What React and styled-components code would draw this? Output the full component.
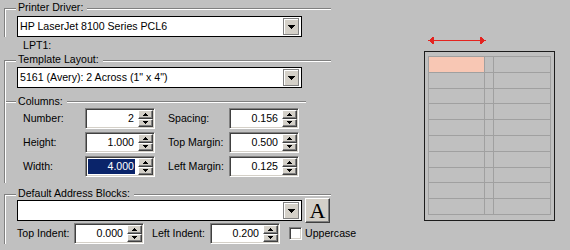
import { Fragment } from "react";
import styled, { createGlobalStyle } from "styled-components";

const GlobalStyle = createGlobalStyle`
  html, body { margin: 0; padding: 0; }
  body {
    background: #c0c0c0;
    font-family: "Liberation Sans", Arial, sans-serif;
    font-size: 10.6px;
    line-height: 13px;
    color: #000;
  }
`;

const Window = styled.div`
  display: flex;
  width: 570px;
  height: 250px;
  overflow: hidden;
`;

const FormPane = styled.div`
  flex: none;
  width: 331px;
  padding-left: 4px;
  box-sizing: border-box;
`;

// etched group box: only top + left edges, like the old label dialogs
const Group = styled.section`
  margin-top: ${(p) => p.$top}px;
  padding: 0 0 ${(p) => p.$bottom || 0}px 12px;
  border-top: 1px solid #808080;
  border-left: 1px solid #808080;
  box-shadow: inset 1px 1px 0 #fff;
`;

const Legend = styled.div`
  width: max-content;
  margin: -8px 0 0 -1px;
  padding: 0 4px 0 2px;
  background: #c0c0c0;
`;

const Note = styled.div`
  margin-top: 2px;
  padding-left: 19px;
`;

const Combo = styled.div`
  display: flex;
  align-items: center;
  width: 285px;
  height: 21px;
  margin-top: ${(p) => p.$top || 0}px;
  box-sizing: border-box;
  border: 1px solid #000;
  background: #fff;
`;

const ComboText = styled.span`
  flex: 1;
  padding-left: 2px;
  white-space: nowrap;
  overflow: hidden;
`;

const DropButton = styled.span`
  display: flex;
  align-items: center;
  justify-content: center;
  width: 16px;
  height: 17px;
  margin-right: 2px;
  box-sizing: border-box;
  background: #d4d0c8;
  border: 1px solid #808080;
  box-shadow: inset 1px 1px 0 #fff;
`;

const Divider = styled.div`
  display: flex;
  align-items: center;
  width: 300px;
  margin: 7px 0 0 -11px;
`;

const Etch = styled.span`
  flex: ${(p) => (p.$grow ? 1 : "none")};
  width: ${(p) => p.$w || 0}px;
  height: 0;
  border-top: 1px solid #808080;
  border-bottom: 1px solid #fff;
`;

const DividerText = styled.span`
  padding: 0 4px 0 2px;
`;

const FieldGrid = styled.div`
  display: grid;
  grid-template-columns: 62px 83px 61px 70px;
  grid-auto-rows: 21px;
  row-gap: 3px;
  margin-left: 6px;
  align-items: center;
`;

const Label = styled.span`
  width: ${(p) => (p.$w ? `${p.$w}px` : "auto")};
  margin-left: ${(p) => p.$gap || 0}px;
  flex: none;
  white-space: nowrap;
`;

const Spinner = styled.div`
  display: flex;
  align-items: center;
  width: 70px;
  height: 21px;
  flex: none;
  box-sizing: border-box;
  padding: 1px 1px 1px 2px;
  background: #fff;
  border: 1px solid;
  border-color: #808080 #fff #fff #808080;
  box-shadow: inset 1px 1px 0 #404040, inset -1px -1px 0 #d4d0c8;
`;

const SpinValue = styled.span`
  flex: 1;
  height: 15px;
  line-height: 15px;
  margin-right: 3px;
  padding-right: 1px;
  text-align: right;
  background: ${(p) => (p.$selected ? "#0a246a" : "transparent")};
  color: ${(p) => (p.$selected ? "#fff" : "#000")};
`;

const SpinStack = styled.div`
  display: flex;
  flex-direction: column;
  width: 15px;
  height: 17px;
`;

const SpinButton = styled.span`
  flex: 1;
  display: flex;
  align-items: center;
  justify-content: center;
  box-sizing: border-box;
  background: #d4d0c8;
  border: 1px solid;
  border-color: #fff #404040 #404040 #fff;
  box-shadow: inset -1px -1px 0 #808080;
`;

const AddressRow = styled.div`
  display: flex;
  align-items: center;
`;

const FontButton = styled.button`
  display: flex;
  align-items: center;
  justify-content: center;
  width: 25px;
  height: 25px;
  margin: -2px 0 -2px 3px;
  padding: 0;
  box-sizing: border-box;
  background: #d4d0c8;
  border: 1px solid;
  border-color: #fff #404040 #404040 #fff;
  box-shadow: inset -1px -1px 0 #808080;
  font-family: "Liberation Serif", "Times New Roman", serif;
  font-size: 22px;
  line-height: 1;
  color: #000;
`;

const IndentRow = styled.div`
  display: flex;
  align-items: center;
  height: 21px;
  margin-top: 2px;
`;

const CheckBox = styled.span`
  width: 13px;
  height: 13px;
  margin-left: 9px;
  flex: none;
  box-sizing: border-box;
  background: #fff;
  border: 1px solid;
  border-color: #808080 #fff #fff #808080;
  box-shadow: inset 1px 1px 0 #404040, inset -1px -1px 0 #d4d0c8;
`;

const PreviewPane = styled.div`
  flex: 1;
  padding: 37px 0 0 93px;
`;

const WidthArrow = styled.svg`
  display: block;
  margin-left: 4px;
`;

const Page = styled.div`
  width: 131px;
  height: 170px;
  margin-top: 7px;
  box-sizing: border-box;
  padding: 4px 3px 5px 3px;
  border: 1px solid #1c1c1c;
`;

const LabelSheet = styled.div`
  display: grid;
  grid-template-columns: 55px 8px 56px;
  grid-template-rows: repeat(10, 1fr);
  gap: 1px;
  height: 100%;
  padding: 1px;
  box-sizing: border-box;
  background: #a0a0a0;
`;

const LabelCell = styled.div`
  background: ${(p) => (p.$active ? "#f8c7b4" : "#c0c0c0")};
`;

const DownArrow = () => (
  <svg width="7" height="4" shapeRendering="crispEdges">
    <rect x="0" y="0" width="7" height="1" />
    <rect x="1" y="1" width="5" height="1" />
    <rect x="2" y="2" width="3" height="1" />
    <rect x="3" y="3" width="1" height="1" />
  </svg>
);

const TinyArrow = ({ up }) => (
  <svg width="5" height="3" shapeRendering="crispEdges">
    <g transform={up ? "" : "translate(0 3) scale(1 -1)"}>
      <rect x="2" y="0" width="1" height="1" />
      <rect x="1" y="1" width="3" height="1" />
      <rect x="0" y="2" width="5" height="1" />
    </g>
  </svg>
);

const ComboBox = ({ value, top }) => (
  <Combo $top={top}>
    <ComboText>{value}</ComboText>
    <DropButton>
      <DownArrow />
    </DropButton>
  </Combo>
);

const NumberField = ({ value, selected }) => (
  <Spinner>
    <SpinValue $selected={selected}>{value}</SpinValue>
    <SpinStack>
      <SpinButton>
        <TinyArrow up />
      </SpinButton>
      <SpinButton>
        <TinyArrow />
      </SpinButton>
    </SpinStack>
  </Spinner>
);

const columns = [
  ["Number:", "2", "Spacing:", "0.156"],
  ["Height:", "1.000", "Top Margin:", "0.500"],
  ["Width:", "4.000", "Left Margin:", "0.125"],
];

export default function App() {
  return (
    <>
      <GlobalStyle />
      <Window>
        <FormPane>
          <Group $top={8}>
            <Legend>Printer Driver:</Legend>
            <ComboBox top={2} value="HP LaserJet 8100 Series PCL6" />
          </Group>
          <Note>LPT1:</Note>

          <Group $top={8} $bottom={6}>
            <Legend>Template Layout:</Legend>
            <ComboBox top={1} value={'5161 (Avery): 2 Across (1" x 4")'} />
            <Divider>
              <Etch $w={10} />
              <DividerText>Columns:</DividerText>
              <Etch $grow />
            </Divider>
            <FieldGrid>
              {columns.map(([l1, v1, l2, v2]) => (
                <Fragment key={l1}>
                  <Label>{l1}</Label>
                  <NumberField value={v1} selected={l1 === "Width:"} />
                  <Label>{l2}</Label>
                  <NumberField value={v2} />
                </Fragment>
              ))}
            </FieldGrid>
          </Group>

          <Group $top={11}>
            <Legend>Default Address Blocks:</Legend>
            <AddressRow>
              <ComboBox value="" />
              <FontButton>A</FontButton>
            </AddressRow>
            <IndentRow>
              <Label $w={57}>Top Indent:</Label>
              <NumberField value="0.000" />
              <Label $w={58} $gap={8}>Left Indent:</Label>
              <NumberField value="0.200" />
              <CheckBox />
              <Label $gap={3}>Uppercase</Label>
            </IndentRow>
          </Group>
        </FormPane>

        <PreviewPane>
          <WidthArrow width="58" height="7" shapeRendering="crispEdges">
            <g fill="#e4231f">
              <rect x="0" y="3" width="58" height="1" />
              <polygon points="0,3.5 5,0.5 5,6.5" />
              <rect x="4" y="0" width="2" height="7" />
              <polygon points="58,3.5 53,0.5 53,6.5" />
              <rect x="52" y="0" width="2" height="7" />
            </g>
          </WidthArrow>
          <Page>
            <LabelSheet>
              {Array.from({ length: 30 }, (_, i) => (
                <LabelCell key={i} $active={i === 0} />
              ))}
            </LabelSheet>
          </Page>
        </PreviewPane>
      </Window>
    </>
  );
}
